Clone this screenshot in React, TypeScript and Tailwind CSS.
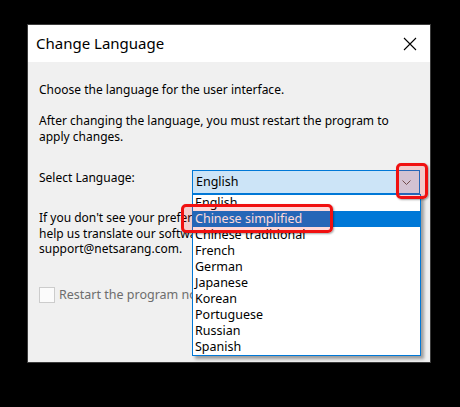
import React from 'react';

const languages = [
  'English',
  'Chinese simplified',
  'Chinese traditional',
  'French',
  'German',
  'Japanese',
  'Korean',
  'Portuguese',
  'Russian',
  'Spanish',
];

const font = { fontFamily: '"Noto Sans", "Liberation Sans", sans-serif' };

export default function App() {
  const [selected] = React.useState('English');
  const hovered = 'Chinese simplified';

  return (
    <div className="w-[460px] h-[407px] bg-black pt-[24px] pl-[27px]" style={font}>
      <div className="relative w-[404px] h-[339px] bg-[#f0f0f0] border border-[#3c3c3c] flex flex-col">
        {/* title bar */}
        <div className="h-[37px] bg-white flex items-center justify-between pl-[8px] pr-[13px]">
          <span className="text-[15px] text-black">Change Language</span>
          <svg width="14" height="14" viewBox="0 0 14 14" className="text-black">
            <path d="M1 1 L13 13 M13 1 L1 13" stroke="currentColor" strokeWidth="1.1" />
          </svg>
        </div>

        {/* body */}
        <div className="flex flex-col pl-[11px] pt-[20px] text-[12px] leading-[16px] text-black">
          <p>Choose the language for the user interface.</p>
          <p className="mt-[15px]">
            After changing the language, you must restart the program to
            <br />
            apply changes.
          </p>

          <div className="mt-[25px] flex items-start">
            <span className="w-[153px]">Select Language:</span>
            <div className="w-[228px] h-[24px] bg-[#cce4f7] border border-[#0078d7] flex items-center justify-between pl-[3px] pr-[8px]">
              <span className="text-[12.5px]">{selected}</span>
              <svg width="9" height="5" viewBox="0 0 9 5">
                <path d="M0.5 0.5 L4.5 4.5 L8.5 0.5" fill="none" stroke="#5a5a5a" strokeWidth="1" />
              </svg>
            </div>
          </div>

          <p className="mt-[16px] whitespace-nowrap leading-[15.5px]">
            If you don't see your preferred language, please
            <br />
            help us translate our software by contacting
            <br />
            support@netsarang.com.
          </p>

          <label className="mt-[30px] flex items-center gap-[4px] text-[#6d6d6d] whitespace-nowrap">
            <span className="w-[16px] h-[16px] border border-[#cccccc] bg-[#fbfbfb]" />
            <span className="text-[12.5px]">Restart the program now</span>
          </label>
        </div>

        {/* open dropdown list */}
        <ul className="absolute left-[164px] top-[169px] w-[229px] bg-white border border-[#0078d7] shadow-[3px_3px_3px_rgba(0,0,0,0.35)] text-[12.5px] text-black">
          {languages.map((lang) => (
            <li
              key={lang}
              className={
                lang === hovered
                  ? 'h-[16px] leading-[16px] pl-[2px] bg-[#0078d7] text-white'
                  : 'h-[16px] leading-[16px] pl-[2px]'
              }
            >
              {lang}
            </li>
          ))}
        </ul>

        {/* annotation boxes */}
        <div className="absolute left-[368px] top-[138px] w-[32px] h-[36px] rounded-[5px] border-[3px] border-[#f01010] bg-[rgba(255,0,0,0.15)] shadow-[1px_1px_2px_rgba(0,0,0,0.35)]" />
        <div className="absolute left-[153px] top-[179px] w-[152px] h-[29px] rounded-[5px] border-[3px] border-[#f01010] bg-[rgba(255,0,0,0.15)] shadow-[1px_1px_2px_rgba(0,0,0,0.35)]" />
      </div>
    </div>
  );
}
